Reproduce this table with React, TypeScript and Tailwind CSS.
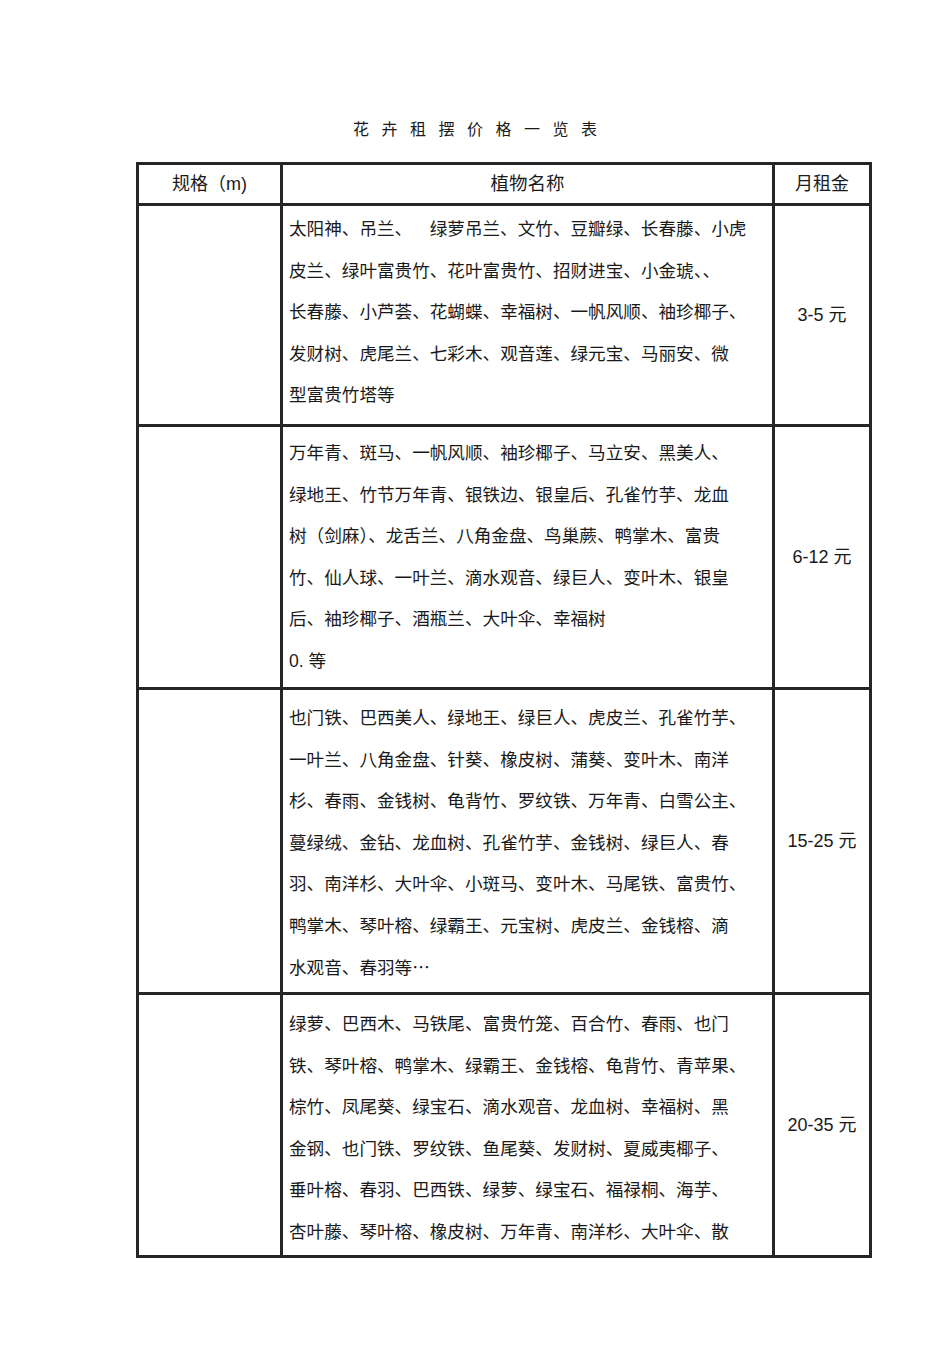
const font = { fontFamily: '"Liberation Sans", "Noto Sans CJK SC", sans-serif' };

interface PriceRow {
  lines: string[];
  price: string;
  height: string;
  pad: string;
}

const rows: PriceRow[] = [
  {
    lines: [
      '太阳神、吊兰、\u3000\u2002绿萝吊兰、文竹、豆瓣绿、长春藤、小虎',
      '皮兰、绿叶富贵竹、花叶富贵竹、招财进宝、小金琥、、',
      '长春藤、小芦荟、花蝴蝶、幸福树、一帆风顺、袖珍椰子、',
      '发财树、虎尾兰、七彩木、观音莲、绿元宝、马丽安、微',
      '型富贵竹塔等',
    ],
    price: '3-5 元',
    height: 'h-[221px]',
    pad: 'pt-[3px]',
  },
  {
    lines: [
      '万年青、斑马、一帆风顺、袖珍椰子、马立安、黑美人、',
      '绿地王、竹节万年青、银铁边、银皇后、孔雀竹芋、龙血',
      '树（剑麻）、龙舌兰、八角金盘、鸟巢蕨、鸭掌木、富贵',
      '竹、仙人球、一叶兰、滴水观音、绿巨人、变叶木、银皇',
      '后、袖珍椰子、酒瓶兰、大叶伞、幸福树',
      '0. 等',
    ],
    price: '6-12 元',
    height: 'h-[263px]',
    pad: 'pt-[6px]',
  },
  {
    lines: [
      '也门铁、巴西美人、绿地王、绿巨人、虎皮兰、孔雀竹芋、',
      '一叶兰、八角金盘、针葵、橡皮树、蒲葵、变叶木、南洋',
      '杉、春雨、金钱树、龟背竹、罗纹铁、万年青、白雪公主、',
      '蔓绿绒、金钻、龙血树、孔雀竹芋、金钱树、绿巨人、春',
      '羽、南洋杉、大叶伞、小斑马、变叶木、马尾铁、富贵竹、',
      '鸭掌木、琴叶榕、绿霸王、元宝树、虎皮兰、金钱榕、滴',
      '水观音、春羽等⋯',
    ],
    price: '15-25 元',
    height: 'h-[305px]',
    pad: 'pt-[8px]',
  },
  {
    lines: [
      '绿萝、巴西木、马铁尾、富贵竹笼、百合竹、春雨、也门',
      '铁、琴叶榕、鸭掌木、绿霸王、金钱榕、龟背竹、青苹果、',
      '棕竹、凤尾葵、绿宝石、滴水观音、龙血树、幸福树、黑',
      '金钢、也门铁、罗纹铁、鱼尾葵、发财树、夏威夷椰子、',
      '垂叶榕、春羽、巴西铁、绿萝、绿宝石、福禄桐、海芋、',
      '杏叶藤、琴叶榕、橡皮树、万年青、南洋杉、大叶伞、散',
    ],
    price: '20-35 元',
    height: 'h-[263px]',
    pad: 'pt-[9px]',
  },
];

export default function App() {
  return (
    <div className="w-[950px] h-[1345px] bg-white text-[#1a1a1a]" style={font}>
      {/* Title */}
      <div className="pt-[120px] h-[162px]">
        <h1 className="text-center text-[16px] leading-[20px] tracking-[12.5px] pl-[12.5px] font-normal">
          花卉租摆价格一览表
        </h1>
      </div>

      {/* Table */}
      <div className="ml-[136px] w-[736px] border-[3px] border-[#262626]">
        <div className="flex h-[38px] text-[18px]">
          <div className="w-[141px] flex items-center justify-center">规格（m)</div>
          <div className="w-[492px] border-l-[3px] border-[#262626] flex items-center justify-center text-[18.5px]">
            植物名称
          </div>
          <div className="flex-1 border-l-[3px] border-[#262626] flex items-center justify-center">
            月租金
          </div>
        </div>

        {rows.map((row, i) => (
          <div key={i} className={`flex border-t-[3px] border-[#262626] ${row.height}`}>
            <div className="w-[141px]" />
            <div
              className={`w-[492px] border-l-[3px] border-[#262626] pl-[6px] ${row.pad} text-[17.6px] leading-[41.6px] whitespace-nowrap overflow-hidden`}
            >
              {row.lines.map((line, j) => (
                <div key={j}>{line}</div>
              ))}
            </div>
            <div className="flex-1 border-l-[3px] border-[#262626] flex items-center justify-center text-[18px]">
              {row.price}
            </div>
          </div>
        ))}
      </div>
    </div>
  );
}
